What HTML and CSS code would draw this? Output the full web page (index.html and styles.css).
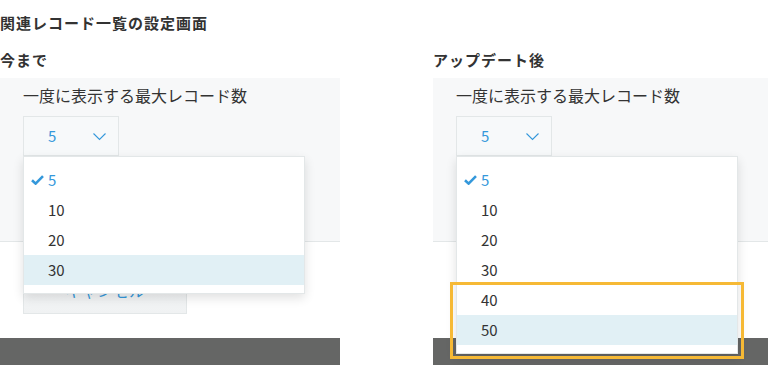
FILE: index.html
```html
<!DOCTYPE html>
<html lang="ja">
<head>
    <meta charset="UTF-8">
    <meta name="viewport" content="width=device-width, initial-scale=1.0">
    <title>関連レコード一覧の設定画面</title>
    <link rel="stylesheet" href="styles.css">
</head>
<body>
    <h1 class="page-title">関連レコード一覧の設定画面</h1>

    <div class="compare">
        <!-- before -->
        <div class="col col-left">
            <h2 class="col-title">今まで</h2>
            <div class="panel">
                <div class="field-label">一度に表示する最大レコード数</div>
                <div class="select-wrap">
                    <div class="select">
                        <span class="select-value">5</span>
                        <svg class="chevron" width="13" height="8" viewBox="0 0 13 8"><polyline points="0.5,0.5 6.5,6.5 12.5,0.5" fill="none" stroke="#3498db" stroke-width="1.1"/></svg>
                    </div>
                    <ul class="menu">
                        <li class="item selected"><svg class="check" width="13" height="10" viewBox="0 0 13 10"><path d="M1 5.2 L4.6 8.6 L12 1.2" fill="none" stroke="#3498db" stroke-width="2.6" stroke-linejoin="miter"/></svg>5</li>
                        <li class="item">10</li>
                        <li class="item">20</li>
                        <li class="item hover">30</li>
                    </ul>
                </div>
            </div>
            <div class="footer">
                <button class="cancel">キャンセル</button>
            </div>
            <div class="bottom-bar"></div>
        </div>

        <!-- after -->
        <div class="col col-right">
            <h2 class="col-title">アップデート後</h2>
            <div class="panel">
                <div class="field-label">一度に表示する最大レコード数</div>
                <div class="select-wrap">
                    <div class="select">
                        <span class="select-value">5</span>
                        <svg class="chevron" width="13" height="8" viewBox="0 0 13 8"><polyline points="0.5,0.5 6.5,6.5 12.5,0.5" fill="none" stroke="#3498db" stroke-width="1.1"/></svg>
                    </div>
                    <ul class="menu">
                        <li class="item selected"><svg class="check" width="13" height="10" viewBox="0 0 13 10"><path d="M1 5.2 L4.6 8.6 L12 1.2" fill="none" stroke="#3498db" stroke-width="2.6" stroke-linejoin="miter"/></svg>5</li>
                        <li class="item">10</li>
                        <li class="item">20</li>
                        <li class="item">30</li>
                        <li class="item">40</li>
                        <li class="item hover">50</li>
                        <div class="new-mark"></div>
                    </ul>
                </div>
            </div>
            <div class="footer">
                <button class="cancel">キャンセル</button>
            </div>
            <div class="bottom-bar"></div>
        </div>
    </div>
</body>
</html>
```

FILE: styles.css
```css
body{
    margin: 0;
    font-family: "Noto Sans CJK JP", "Noto Sans", sans-serif;
    color: #333;
    background: #fff;
    overflow: hidden;
}
.page-title{
    margin: 13px 0 0 0;
    font-size: 15px;
    line-height: 20px;
    font-weight: bold;
    letter-spacing: 1px;
}
.compare{
    display: flex;
    gap: 93px;
}
.col-left{
    width: 340px;
}
.col-right{
    flex: 1;
}
.col-title{
    margin: 17px 0 8px 0;
    font-size: 15px;
    line-height: 20px;
    font-weight: bold;
    letter-spacing: 1px;
}
.panel{
    background-color: #f7f8f9;
    border-bottom: 1px solid #e3e7e8;
    padding: 7px 0 0 23px;
    box-sizing: border-box;
    height: 164px;
}
.field-label{
    font-size: 16px;
    line-height: 20px;
    color: #333;
}
.select-wrap{
    position: relative;
    margin-top: 11px;
}
.select{
    width: 96px;
    height: 40px;
    box-sizing: border-box;
    border: 1px solid #e3e7e8;
    background-color: #f7f9fa;
    display: flex;
    align-items: center;
    padding-left: 24px;
}
.select-value{
    color: #3498db;
    font-size: 15px;
    line-height: 20px;
}
.chevron{
    margin-left: 37px;
    margin-top: 1px;
}
.menu{
    position: absolute;
    top: 40px;
    left: 0;
    width: 282px;
    box-sizing: border-box;
    margin: 0;
    padding: 8px 0;
    list-style: none;
    background: #fff;
    border: 1px solid #e3e7e8;
    box-shadow: 0 4px 10px rgba(0, 0, 0, 0.12);
    z-index: 2;
}
.item{
    height: 30px;
    line-height: 29px;
    padding-left: 24px;
    font-size: 15px;
    color: #333;
    position: relative;
}
.item.selected{
    color: #3498db;
}
.item.hover{
    background-color: #e1f0f5;
}
.check{
    position: absolute;
    left: 7px;
    top: 10px;
}
.new-mark{
    position: absolute;
    left: -7px;
    top: 125px;
    width: 294px;
    height: 77px;
    box-sizing: border-box;
    border: 3px solid #f6b935;
}
.footer{
    padding: 24px 0 0 23px;
    height: 96px;
    box-sizing: border-box;
}
.cancel{
    width: 164px;
    height: 48px;
    border: 1px solid #e3e7e8;
    background: linear-gradient(#f7f9fa, #f0f2f3);
    color: #3498db;
    font-family: "Noto Sans CJK JP", sans-serif;
    font-size: 16px;
}
.bottom-bar{
    height: 30px;
    background-color: #656665;
}
```
